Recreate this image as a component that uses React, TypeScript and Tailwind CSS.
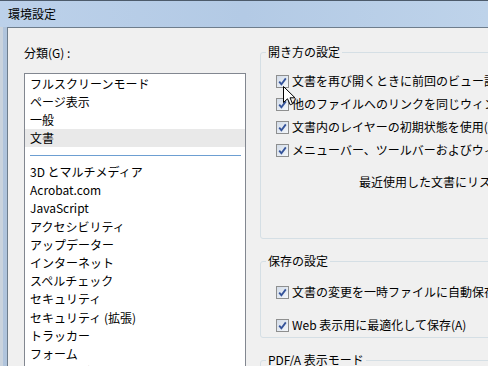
import React from "react";

const Check = () => (
  <span className="w-[13px] h-[13px] shrink-0 border border-[#8e8f8f] bg-gradient-to-br from-[#d3dce8] to-[#f4f7fb] flex items-center justify-center">
    <svg width="11" height="11" viewBox="0 0 11 11">
      <path d="M2.2 5.6 L4.4 8.2 L8.8 2.4" fill="none" stroke="#34539a" strokeWidth="1.8" strokeLinejoin="miter" />
    </svg>
  </span>
);

const Row = ({ children }: { children: React.ReactNode }) => (
  <div className="h-[18px] flex items-center gap-[3px] whitespace-nowrap">
    <Check />
    <span className="leading-[18px]">{children}</span>
  </div>
);

const items1 = ["フルスクリーンモード", "ページ表示", "一般"];
const items2 = [
  "3D とマルチメディア",
  "Acrobat.com",
  "JavaScript",
  "アクセシビリティ",
  "アップデーター",
  "インターネット",
  "スペルチェック",
  "セキュリティ",
  "セキュリティ (拡張)",
  "トラッカー",
  "フォーム",
  "マルチメディア (旧形式)",
];

export default function App() {
  return (
    <div className="relative w-[488px] h-[366px] overflow-hidden flex flex-col border-t border-[#4d5b6b] bg-gradient-to-b from-[#c3d5eb] to-[#a9c0dc] text-[12px] text-black font-['Noto_Sans_CJK_JP','Noto_Sans',sans-serif]">
      <div className="h-[26px] shrink-0 flex items-center pl-[8px] bg-gradient-to-r from-[#bcd1ea] via-[#b3cae5] to-[#bed3ea] leading-none">
        環境設定
      </div>
      <div className="flex flex-1 min-h-0">
        <div className="w-[7px] shrink-0 flex">
          <div className="w-[3px] bg-[#cad3dd]" />
          <div className="flex-1 bg-[#b0c4dc]" />
        </div>
        <div className="flex-1 flex border-l border-t border-[#6e7d8c] bg-[#f0f0f0] min-w-0">
          <div className="pl-[16px] pt-[16px] shrink-0 flex flex-col">
            <div className="leading-[18px] h-[18px]">分類(G) :</div>
            <div className="mt-[11px] w-[222px] h-[400px] border border-[#828790] bg-white pt-[1px]">
              {items1.map((t) => (
                <div key={t} className="h-[18px] leading-[18px] pl-[5px] whitespace-nowrap">{t}</div>
              ))}
              <div className="h-[18px] leading-[18px] pl-[5px] bg-[#e9e9e9]">文書</div>
              <div className="h-[16px] pt-[8px] pl-[5px] pr-[4px]">
                <div className="h-px bg-[#6d9fd2]" />
              </div>
              {items2.map((t) => (
                <div key={t} className="h-[18.2px] leading-[18px] pl-[5px] whitespace-nowrap">{t}</div>
              ))}
            </div>
          </div>
          <div className="ml-[14px] pt-[15px] w-[320px] shrink-0 flex flex-col">
            <fieldset className="border border-[#d5dfe5] rounded-[3px] p-0 m-0">
              <legend className="ml-[5px] px-[2px] leading-[18px]">開き方の設定</legend>
              <div className="pl-[15px] pt-[11px] pb-[47px] flex flex-col">
                <div className="flex flex-col gap-[5px]">
                  <Row>文書を再び開くときに前回のビュー設定を復元</Row>
                  <Row>他のファイルへのリンクを同じウィンドウで開く</Row>
                  <Row>文書内のレイヤーの初期状態を使用(I)</Row>
                  <Row>メニューバー、ツールバーおよびウィンドウ</Row>
                </div>
                <div className="mt-[14px] pl-[83px] h-[18px] leading-[18px] whitespace-nowrap">最近使用した文書にリストする文書の数</div>
              </div>
            </fieldset>
            <fieldset className="mt-[13px] border border-[#d5dfe5] rounded-[3px] p-0 m-0">
              <legend className="ml-[5px] px-[2px] leading-[18px]">保存の設定</legend>
              <div className="pl-[15px] pt-[13px] pb-[3px] flex flex-col gap-[15px]">
                <Row>文書の変更を一時ファイルに自動保存する</Row>
                <Row>Web 表示用に最適化して保存(A)</Row>
              </div>
            </fieldset>
            <fieldset className="mt-[13px] border border-[#d5dfe5] rounded-[3px] p-0 m-0 h-[60px]">
              <legend className="ml-[5px] px-[2px] leading-[18px]">PDF/A 表示モード</legend>
            </fieldset>
          </div>
        </div>
      </div>
      <svg className="absolute left-[283px] top-[85px]" width="13" height="20" viewBox="0 0 13 20">
        <path d="M0.5 0.5 L0.5 16.5 L4.5 12.8 L7.2 18.8 L9.6 17.8 L7 11.8 L12 11.8 Z" fill="#ffffff" stroke="#000000" strokeWidth="1" strokeLinejoin="miter" />
      </svg>
    </div>
  );
}
